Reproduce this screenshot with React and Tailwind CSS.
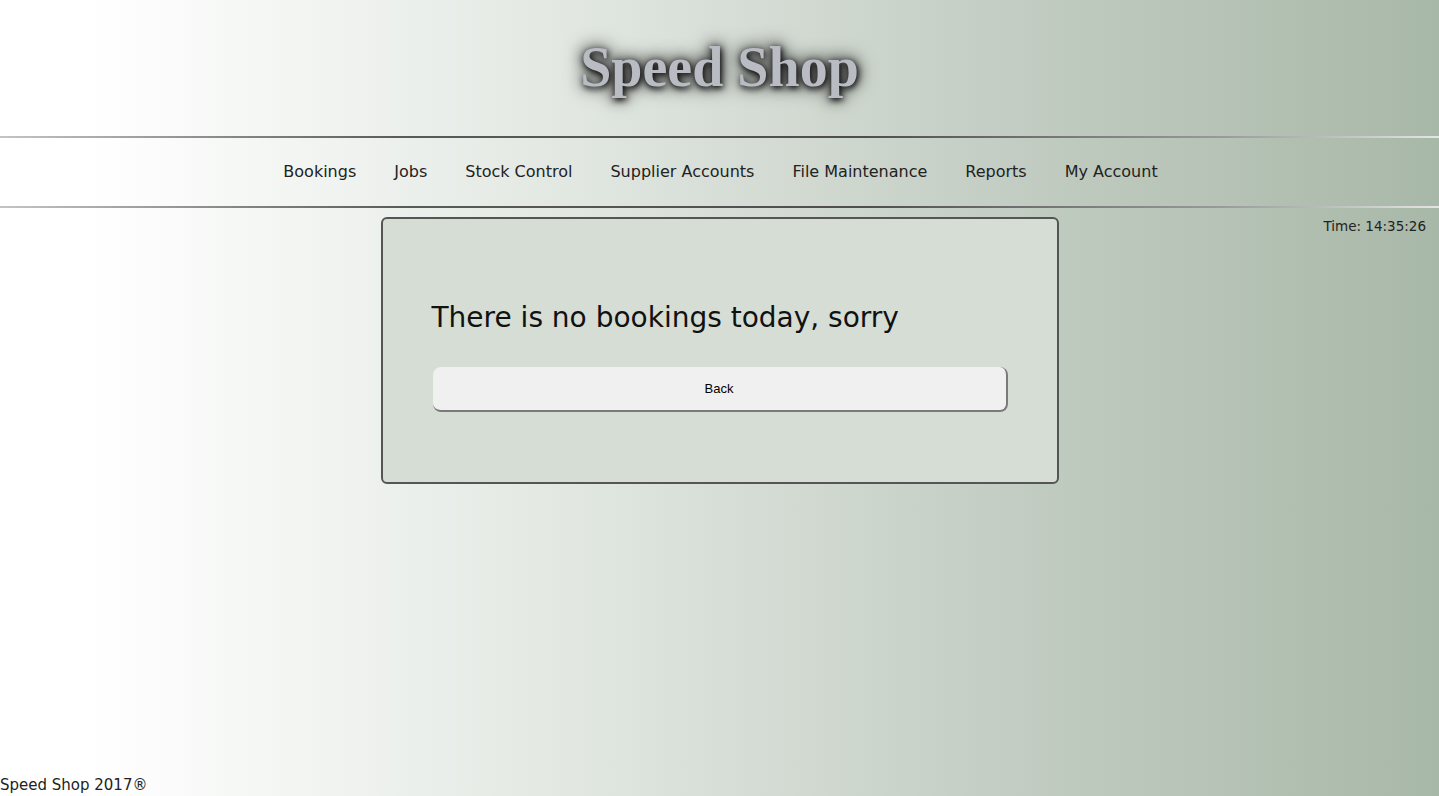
const navItems = ['Bookings', 'Jobs', 'Stock Control', 'Supplier Accounts', 'File Maintenance', 'Reports', 'My Account']

function Rule() {
  return <div className="h-[2px] w-full bg-[linear-gradient(to_right,#c4c4c4,#5a5a5a_28%,#4e4e4e_60%,#9a9a9a_85%,#e4e4e4)]" />
}

export default function App() {
  return (
    <div className="flex min-h-screen flex-col bg-[linear-gradient(to_right,#ffffff_6%,#e6ebe6_35%,#c3cdc3_70%,#a8b8a8)] font-['DejaVu_Sans',sans-serif] text-[#111]">
      <header className="flex h-[136px] items-center justify-center pb-[2px]">
        <h1 className="font-['Liberation_Serif',serif] text-[56px] font-bold leading-none text-[#b9bcc3] [text-shadow:1px_2px_6px_#000,0_0_14px_#222,0_0_20px_#555]">
          Speed Shop
        </h1>
      </header>
      <Rule />
      <nav className="flex h-[68px] items-center justify-center gap-[38px] pl-[2px] text-[16px]">
        {navItems.map((item) => (
          <a key={item} href="#" className="text-[#222]">
            {item}
          </a>
        ))}
      </nav>
      <Rule />
      <main className="grid grid-cols-[1fr_678px_1fr] pt-[9px]">
        <div />
        <section className="h-[267px] rounded-[6px] border-2 border-[#555] bg-[#d5ddd5] px-[49px] pt-[79px]">
          <p className="text-[28px] leading-[40px] text-[#111]">There is no bookings today, sorry</p>
          <button
            type="button"
            className="mt-[29px] ml-px h-[45px] w-[575px] rounded-[8px] border-r-2 border-b-2 border-[#7a7a7a] bg-[#f0f0f0] font-['Liberation_Sans',sans-serif] text-[13px] text-black"
          >
            Back
          </button>
        </section>
        <div className="flex justify-end pr-[13px] pt-[1px]">
          <p className="text-[13.5px] leading-4 text-[#222]">Time: 14:35:26</p>
        </div>
      </main>
      <footer className="mt-auto pb-[1px] text-[15px] leading-5 text-[#222]">Speed Shop 2017®</footer>
    </div>
  )
}
